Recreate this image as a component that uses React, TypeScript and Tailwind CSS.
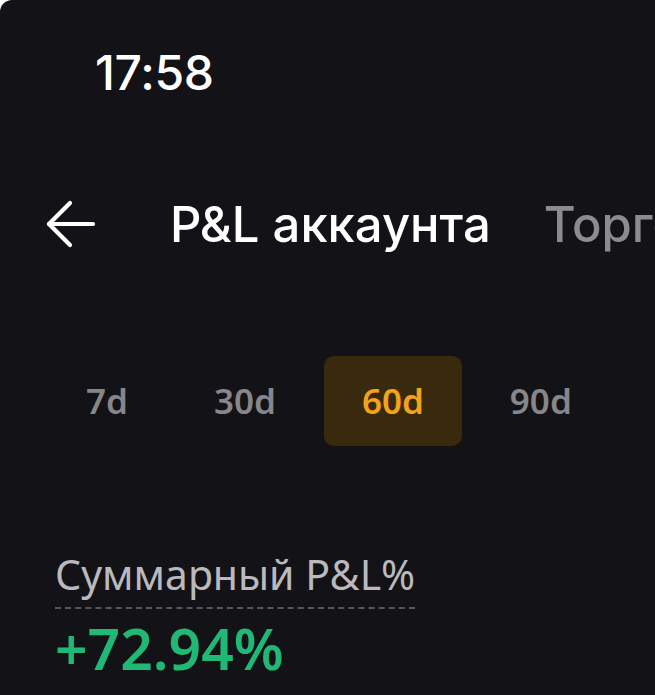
const tabs = ["7d", "30d", "60d", "90d"];

function BackArrow() {
  return (
    <svg width="50" height="48" viewBox="0 0 50 48" fill="none" stroke="#ffffff" strokeWidth="4.2" strokeLinecap="round" strokeLinejoin="round">
      <path d="M47 24H3" />
      <path d="M24 3L3 24l21 21" />
    </svg>
  );
}

export default function App() {
  const active = "60d";

  return (
    <div className="w-[655px] h-[695px] bg-white">
      <div className="h-full overflow-hidden rounded-tl-[12px] bg-[#131317] font-['Inter',sans-serif]">
        {/* status bar */}
        <div className="pl-[95px] pt-[49px] text-[48px] font-medium leading-none text-white tracking-[-0.3px]">
          17:58
        </div>

        {/* header */}
        <div className="mt-[97px] flex items-center h-[60px] whitespace-nowrap">
          <div className="ml-[46px] w-[124px] shrink-0">
            <BackArrow />
          </div>
          <span className="shrink-0 text-[49px] font-medium text-white leading-none">P&amp;L аккаунта</span>
          <span className="shrink-0 ml-[53px] text-[49px] font-medium text-[#8b8b90] leading-none">Торговая</span>
        </div>

        {/* period tabs */}
        <div className="mt-[102px] flex gap-[10px] pl-[48px]">
          {tabs.map((t) => (
            <div
              key={t}
              className={
                "h-[90px] px-[38px] flex items-center rounded-[10px] text-[35px] font-semibold font-['Noto_Sans',sans-serif] " +
                (t === active ? "bg-[#3a2a0d] text-[#f2a31b]" : "text-[#86868b]")
              }
            >
              {t}
            </div>
          ))}
        </div>

        {/* summary */}
        <div className="mt-[108px] pl-[55px] font-['Noto_Sans',sans-serif]">
          <div className="inline-block border-b-2 border-dashed border-[#55555a] pb-[12px] text-[41px] leading-none text-[#b9b9be]">
            Суммарный P&amp;L%
          </div>
          <div className="mt-[11px] text-[57px] font-semibold leading-none text-[#1fb874]">+72.94%</div>
        </div>
      </div>
    </div>
  );
}
